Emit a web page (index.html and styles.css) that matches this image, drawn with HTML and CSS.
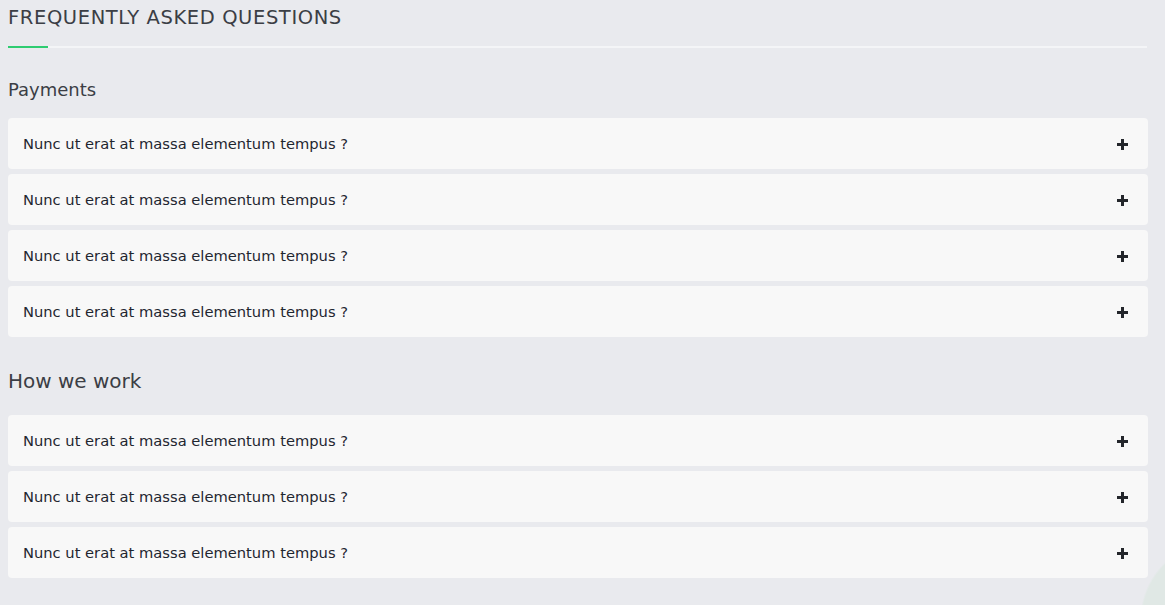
FILE: index.html
```html
<!DOCTYPE html>
<html>
<head>
<meta charset="utf-8">
<link rel="stylesheet" href="styles.css">
</head>
<body>
<div class="faq">
  <h2 class="faq-title">FREQUENTLY ASKED QUESTIONS</h2>
  <div class="faq-rule"><span class="faq-rule-accent"></span></div>

  <section class="faq-group">
    <h3 class="group-title">Payments</h3>
    <div class="item"><span class="q">Nunc ut erat at massa elementum tempus ?</span><span class="plus"></span></div>
    <div class="item"><span class="q">Nunc ut erat at massa elementum tempus ?</span><span class="plus"></span></div>
    <div class="item"><span class="q">Nunc ut erat at massa elementum tempus ?</span><span class="plus"></span></div>
    <div class="item"><span class="q">Nunc ut erat at massa elementum tempus ?</span><span class="plus"></span></div>
  </section>

  <section class="faq-group">
    <h3 class="group-title">How we work</h3>
    <div class="item"><span class="q">Nunc ut erat at massa elementum tempus ?</span><span class="plus"></span></div>
    <div class="item"><span class="q">Nunc ut erat at massa elementum tempus ?</span><span class="plus"></span></div>
    <div class="item"><span class="q">Nunc ut erat at massa elementum tempus ?</span><span class="plus"></span></div>
  </section>
</div>
</body>
</html>
```
FILE: styles.css
```css
html, body {
  margin: 0;
  padding: 0;
}
body {
  font-family: "DejaVu Sans", sans-serif;
  height: 605px;
  overflow: hidden;
  background-color: #e9eaee;
  background-image: radial-gradient(circle at 1220px 620px, #e0e8e5 0, #e0e8e5 78px, rgba(233, 234, 238, 0) 80px);
}
.faq {
  width: 1140px;
  margin-left: 8px;
  padding-top: 6px;
}
.faq-title {
  margin: 0;
  font-weight: 400;
  font-size: 19.5px;
  line-height: 23px;
  color: #3b3e45;
  letter-spacing: 0.6px;
}
.faq-rule {
  margin-top: 17px;
  height: 2px;
  background: #f4f5f7;
  width: 1139px;
}
.faq-rule-accent {
  display: block;
  width: 40px;
  height: 2px;
  background: #2ecc71;
}
.faq-group {
  display: flex;
  flex-direction: column;
  gap: 5px;
}
.group-title {
  margin: 0;
  font-weight: 400;
  color: #3b3e45;
}
.faq-group:first-of-type .group-title {
  font-size: 18px;
  line-height: 22px;
  margin-top: 31px;
  margin-bottom: 12px;
}
.faq-group + .faq-group .group-title {
  font-size: 20px;
  line-height: 26px;
  margin-top: 31px;
  margin-bottom: 16px;
}
.item {
  height: 51px;
  background: #f8f8f8;
  border-radius: 4px;
  display: flex;
  align-items: center;
  justify-content: space-between;
  padding: 0 20px 0 15px;
}
.q {
  font-size: 14.7px;
  color: #1f2630;
}
.plus {
  position: relative;
  width: 11px;
  height: 11px;
  margin-top: 2px;
}
.plus::before, .plus::after {
  content: "";
  position: absolute;
  background: #23262b;
}
.plus::before {
  left: 0; top: 4px; width: 11px; height: 3px;
}
.plus::after {
  left: 4px; top: 0; width: 3px; height: 11px;
}
```
